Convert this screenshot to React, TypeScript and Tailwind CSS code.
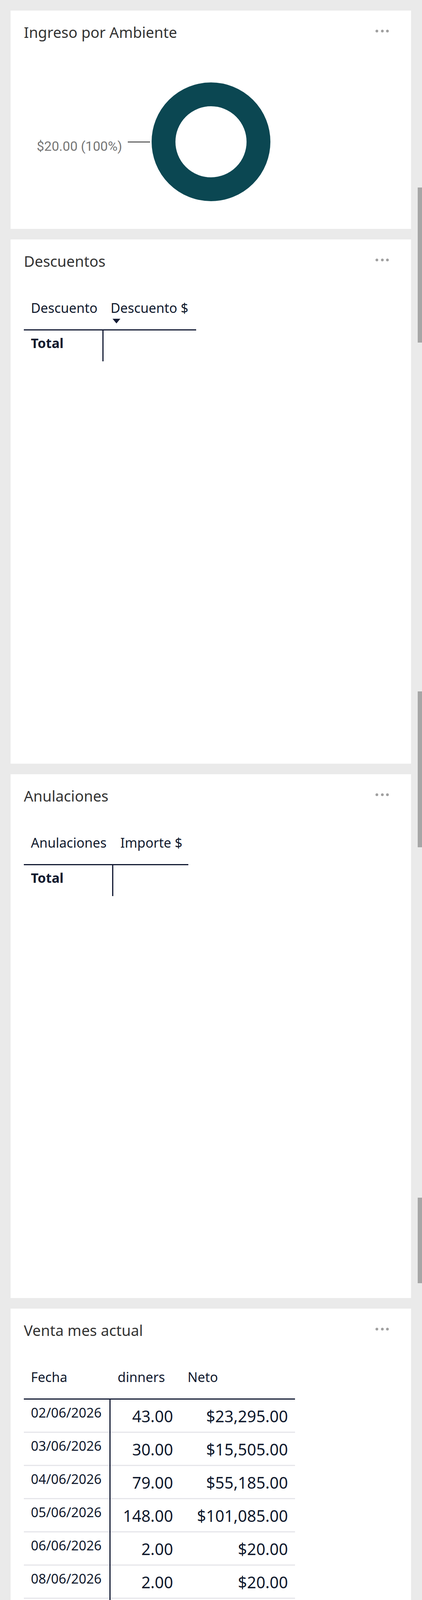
import React from "react";

const NAVY = "text-[#111a2e]";

function Dots() {
  return (
    <div className="absolute right-[57px] top-[49px] flex gap-[6.5px]">
      <span className="block h-[7px] w-[7px] rounded-full bg-[#a0a0a0]" />
      <span className="block h-[7px] w-[7px] rounded-full bg-[#a0a0a0]" />
      <span className="block h-[7px] w-[7px] rounded-full bg-[#a0a0a0]" />
    </div>
  );
}

function Card({ title, h, children }: { title: string; h: string; children?: React.ReactNode }) {
  return (
    <section className={`relative bg-white px-[34px] pt-[36px] ${h}`}>
      <h2 className="text-[38px] leading-none text-[#333333] font-normal">{title}</h2>
      <Dots />
      {children}
    </section>
  );
}

function EmptyTable({
  c1,
  c2,
  w1,
  w2,
  sort,
}: {
  c1: string;
  c2: string;
  w1: string;
  w2: string;
  sort?: boolean;
}) {
  return (
    <div className={`mt-[84px] flex flex-col ${NAVY}`}>
      <div className="flex h-[75px] w-fit border-b-[3px] border-[#121a33] text-[34px] leading-none">
        <div className={`${w1} pl-[18px]`}>{c1}</div>
        <div className={`relative ${w2} pl-[18px]`}>
          {c2}
          {sort && (
            <span className="absolute left-[23px] top-[45px] h-0 w-0 border-x-[10.5px] border-t-[12px] border-x-transparent border-t-[#121a33]" />
          )}
        </div>
      </div>
      <div className="flex h-[79px] w-fit">
        <div className={`${w1} border-r-[3px] border-[#121a33] pl-[18px] pt-[15px] text-[34px] font-bold leading-none`}>
          Total
        </div>
        <div className={w2} />
      </div>
    </div>
  );
}

const rows = [
  ["02/06/2026", "43.00", "$23,295.00"],
  ["03/06/2026", "30.00", "$15,505.00"],
  ["04/06/2026", "79.00", "$55,185.00"],
  ["05/06/2026", "148.00", "$101,085.00"],
  ["06/06/2026", "2.00", "$20.00"],
  ["08/06/2026", "2.00", "$20.00"],
];

function VentaTable() {
  return (
    <div className={`mt-[84px] w-[694px] ${NAVY}`}>
      <div className="flex h-[75px] border-b-[3px] border-[#121a33] text-[34px] leading-none">
        <div className="w-[222px] pl-[18px]">Fecha</div>
        <div className="w-[178px] pl-[18px]">dinners</div>
        <div className="w-[294px] pl-[19px]">Neto</div>
      </div>
      <div className="flex">
        <div className="flex w-[222px] flex-col border-r-[3px] border-[#121a33]">
          {rows.map((r) => (
            <div key={r[0]} className="h-[85px] border-b-[3px] border-[#e6e6ea] pl-[18px] pt-[16px] text-[34px] leading-none">
              {r[0]}
            </div>
          ))}
          <div className="h-[78px] pl-[18px] pt-[14px] text-[34px] font-bold leading-none">Total</div>
        </div>
        <div className="flex w-[178px] flex-col">
          {rows.map((r) => (
            <div key={r[0]} className="h-[85px] border-b-[3px] border-[#e6e6ea] pr-[18px] pt-[22px] text-right text-[41px] leading-none">
              {r[1]}
            </div>
          ))}
          <div className="h-[78px] pr-[18px] pt-[20px] text-right text-[41px] font-bold leading-none">304.00</div>
        </div>
        <div className="flex w-[294px] flex-col">
          {rows.map((r) => (
            <div key={r[0]} className="h-[85px] border-b-[3px] border-[#e6e6ea] pr-[18px] pt-[22px] text-right text-[41px] leading-none">
              {r[2]}
            </div>
          ))}
          <div className="h-[78px] pr-[18px] pt-[20px] text-right text-[41px] font-bold leading-none">$195,110.00</div>
        </div>
      </div>
    </div>
  );
}

export default function App() {
  return (
    <div className="relative h-[4701px] overflow-hidden bg-[#eaeaea] pl-[27px] pr-[28px] pt-[27px] font-['Noto_Sans',sans-serif]">
      <div className="flex flex-col gap-[27px]">
        <Card title="Ingreso por Ambiente" h="h-[559px]">
          <div className="mt-[110px] flex h-[304px] items-center">
            <span className="ml-[33px] mt-[22px] font-['Roboto',sans-serif] text-[34px] leading-none text-[#767676]">
              $20.00 (100%)
            </span>
            <span className="ml-[14px] block h-[3px] w-[57px] bg-[#666666]" />
            <svg className="ml-[4px] shrink-0" width="304" height="304" viewBox="0 0 304 304">
              <circle cx="152" cy="152" r="121.5" fill="none" stroke="#0b4752" strokeWidth="61" />
            </svg>
          </div>
        </Card>
        <Card title="Descuentos" h="h-[1342px]">
          <EmptyTable c1="Descuento" c2="Descuento $" w1="w-[204px]" w2="w-[237px]" sort />
        </Card>
        <Card title="Anulaciones" h="h-[1341px]">
          <EmptyTable c1="Anulaciones" c2="Importe $" w1="w-[229px]" w2="w-[192px]" />
        </Card>
        <Card title="Venta mes actual" h="h-[1341px]">
          <VentaTable />
        </Card>
      </div>
      <div className="absolute left-[1069px] top-[480px] h-[397px] w-[11px] bg-[#a6a6a6]" />
      <div className="absolute left-[1069px] top-[1770px] h-[399px] w-[11px] bg-[#a6a6a6]" />
      <div className="absolute left-[1069px] top-[3066px] h-[219px] w-[11px] bg-[#a6a6a6]" />
      <div className="absolute left-[1069px] top-[4359px] h-[22px] w-[11px] bg-[#a6a6a6]" />
    </div>
  );
}
